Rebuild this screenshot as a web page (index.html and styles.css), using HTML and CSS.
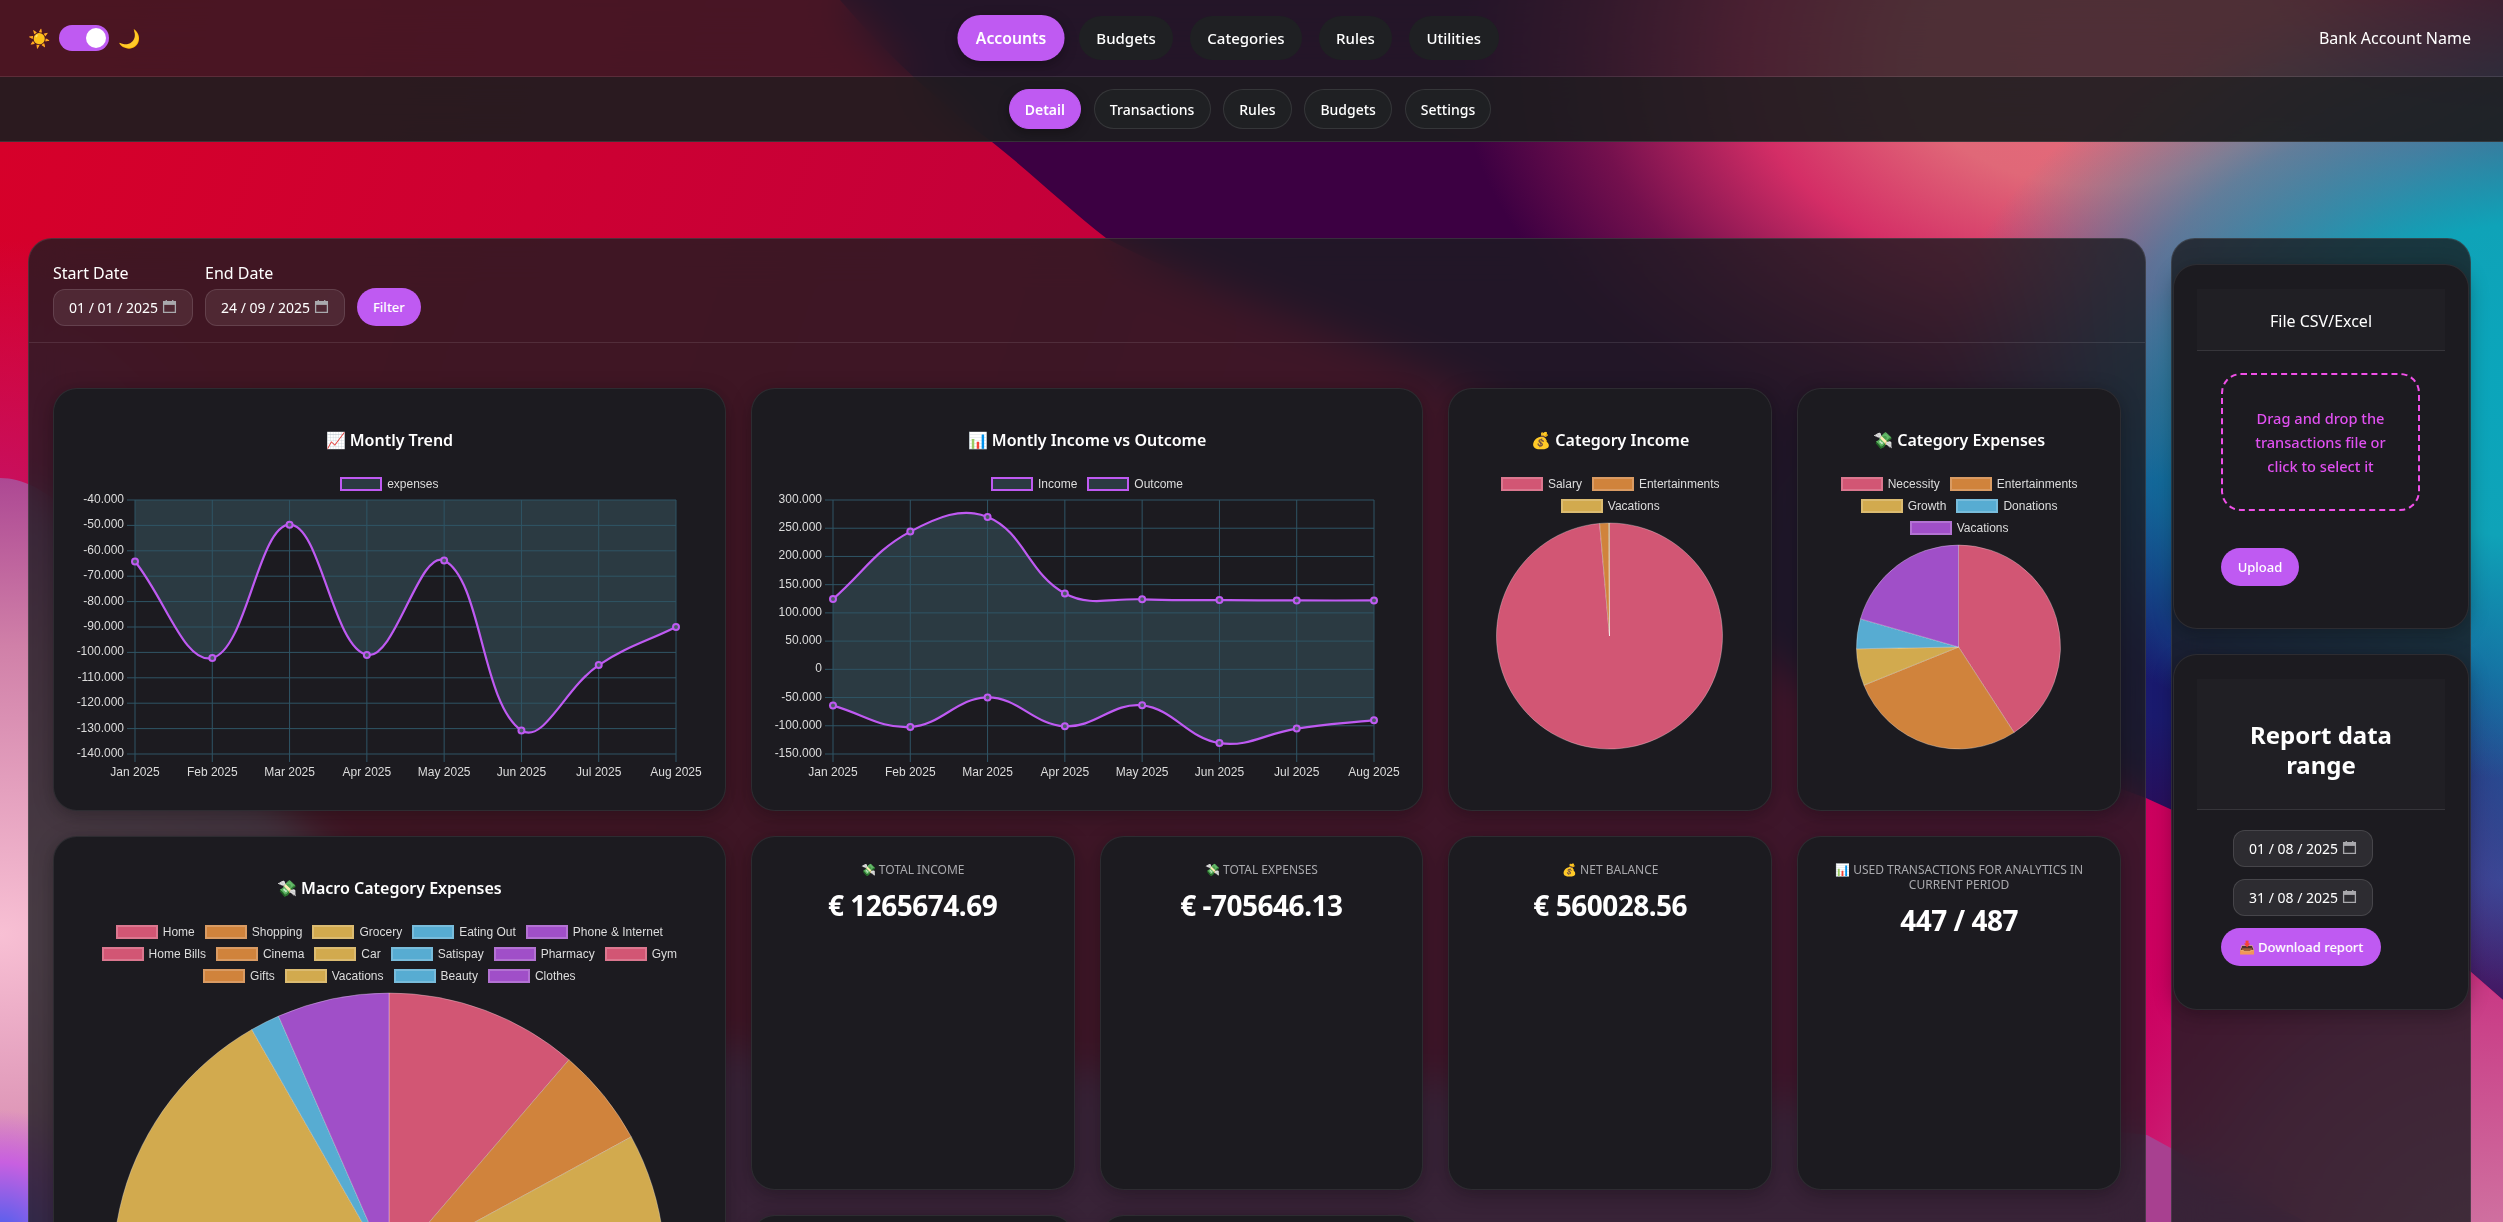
FILE: index.html
```html
<!DOCTYPE html>
<html lang="en">

<head>
    <meta charset="UTF-8">
    <meta name="viewport" content="width=device-width, initial-scale=1.0">
    <title>Accounts - Detail</title>
    <link rel="stylesheet" href="styles.css">
    <script src="charts.js" defer></script>
</head>

<body>
    <!-- wallpaper behind the glass panels -->
    <svg class="wallpaper" viewBox="0 0 2503 1222" width="2503" height="1222" aria-hidden="true">
        <defs>
            <linearGradient id="redFill" gradientUnits="userSpaceOnUse" x1="0" y1="142" x2="2200" y2="900">
                <stop offset="0" stop-color="#d6002a" />
                <stop offset="0.45" stop-color="#c4003a" />
                <stop offset="1" stop-color="#cc0060" />
            </linearGradient>
            <radialGradient id="redLeft" gradientUnits="userSpaceOnUse" cx="0" cy="500" r="260">
                <stop offset="0" stop-color="#c81060" />
                <stop offset="1" stop-color="#c81060" stop-opacity="0" />
            </radialGradient>
            <radialGradient id="redRight" gradientUnits="userSpaceOnUse" cx="2503" cy="1300" r="500">
                <stop offset="0" stop-color="#d080a8" />
                <stop offset="0.16" stop-color="#cf6f9f" />
                <stop offset="0.62" stop-color="#c93a85" />
                <stop offset="1" stop-color="#cc0060" stop-opacity="0" />
            </radialGradient>
            <radialGradient id="pinkFill" gradientUnits="userSpaceOnUse" cx="0" cy="0" r="1"
                gradientTransform="translate(0 934) scale(700 480)">
                <stop offset="0" stop-color="#f8c0d4" />
                <stop offset="0.6" stop-color="#d080a8" />
                <stop offset="1" stop-color="#a84090" />
            </radialGradient>
            <radialGradient id="blueCorner" gradientUnits="userSpaceOnUse" cx="0" cy="1240" r="130">
                <stop offset="0" stop-color="#4060f0" />
                <stop offset="0.6" stop-color="#c860e0" />
                <stop offset="1" stop-color="#c860e0" stop-opacity="0" />
            </radialGradient>
        </defs>
        <path fill="url(#redFill)"
            d="M840 0 C900 70 950 110 992 142 C1030 172 1070 210 1106 238 C1200 290 1350 330 1490 400 C1600 470 1680 600 1785 673 C1900 730 2020 750 2146 798 C2260 850 2380 910 2471 972 L2503 1000 L2503 1222 L0 1222 L0 0 Z" />
        <rect x="0" y="240" width="260" height="520" fill="url(#redLeft)" />
        <path fill="url(#redRight)"
            d="M2146 798 C2260 850 2380 910 2471 972 L2503 1000 L2503 1222 L2000 1222 Z" />
        <path fill="url(#pinkFill)"
            d="M0 478 C60 478 110 560 170 640 C240 760 330 900 560 1010 C800 1100 1300 1040 2147 1135 L2503 1330 L0 1330 Z" />
        <rect x="0" y="1110" width="130" height="112" fill="url(#blueCorner)" />
    </svg>

    <header class="topbar">
        <div class="theme-switch">
            <span class="theme-icon">☀️</span>
            <span class="toggle"><span class="toggle-knob"></span></span>
            <span class="theme-icon">🌙</span>
        </div>
        <nav class="pills">
            <a class="pill active">Accounts</a>
            <a class="pill">Budgets</a>
            <a class="pill">Categories</a>
            <a class="pill">Rules</a>
            <a class="pill">Utilities</a>
        </nav>
        <div class="account-name">Bank Account Name</div>
    </header>

    <nav class="subnav">
        <a class="subpill active">Detail</a>
        <a class="subpill">Transactions</a>
        <a class="subpill">Rules</a>
        <a class="subpill">Budgets</a>
        <a class="subpill">Settings</a>
    </nav>

    <main class="content">
        <section class="panel">
            <form class="filters">
                <div class="field">
                    <label>Start Date</label>
                    <div class="date-input">01 / 01 / 2025
                        <svg class="cal" viewBox="0 0 14 14"><path class="cal-band" d="M1.5 2.5h11v3h-11z" /><path d="M1.5 2.5h11v10h-11zM4 1v1.5M10 1v1.5" /></svg>
                    </div>
                </div>
                <div class="field">
                    <label>End Date</label>
                    <div class="date-input">24 / 09 / 2025
                        <svg class="cal" viewBox="0 0 14 14"><path class="cal-band" d="M1.5 2.5h11v3h-11z" /><path d="M1.5 2.5h11v10h-11zM4 1v1.5M10 1v1.5" /></svg>
                    </div>
                </div>
                <button type="button" class="btn">Filter</button>
            </form>

            <div class="dashboard">
                <div class="card span-2">
                    <h3 class="card-title">📈 Montly Trend</h3>
                    <div class="legend">
                        <span class="legend-item"><i class="swatch swatch-line"></i>expenses</span>
                    </div>
                    <div class="chart" id="trendChart"></div>
                </div>
                <div class="card span-2">
                    <h3 class="card-title">📊 Montly Income vs Outcome</h3>
                    <div class="legend">
                        <span class="legend-item"><i class="swatch swatch-line"></i>Income</span>
                        <span class="legend-item"><i class="swatch swatch-line"></i>Outcome</span>
                    </div>
                    <div class="chart" id="incomeChart"></div>
                </div>
                <div class="card">
                    <h3 class="card-title">💰 Category Income</h3>
                    <div class="legend">
                        <span class="legend-item"><i class="swatch pink"></i>Salary</span>
                        <span class="legend-item"><i class="swatch orange"></i>Entertainments</span>
                        <span class="legend-item"><i class="swatch gold"></i>Vacations</span>
                    </div>
                    <div class="chart" id="catIncomeChart"></div>
                </div>
                <div class="card">
                    <h3 class="card-title">💸 Category Expenses</h3>
                    <div class="legend">
                        <span class="legend-item"><i class="swatch pink"></i>Necessity</span>
                        <span class="legend-item"><i class="swatch orange"></i>Entertainments</span>
                        <span class="legend-item"><i class="swatch gold"></i>Growth</span>
                        <span class="legend-item"><i class="swatch blue"></i>Donations</span>
                        <span class="legend-item"><i class="swatch purple"></i>Vacations</span>
                    </div>
                    <div class="chart" id="catExpenseChart"></div>
                </div>

                <div class="card span-2 tall">
                    <h3 class="card-title">💸 Macro Category Expenses</h3>
                    <div class="legend">
                        <span class="legend-item"><i class="swatch pink"></i>Home</span>
                        <span class="legend-item"><i class="swatch orange"></i>Shopping</span>
                        <span class="legend-item"><i class="swatch gold"></i>Grocery</span>
                        <span class="legend-item"><i class="swatch blue"></i>Eating Out</span>
                        <span class="legend-item"><i class="swatch purple"></i>Phone &amp; Internet</span>
                        <span class="legend-item"><i class="swatch pink"></i>Home Bills</span>
                        <span class="legend-item"><i class="swatch orange"></i>Cinema</span>
                        <span class="legend-item"><i class="swatch gold"></i>Car</span>
                        <span class="legend-item"><i class="swatch blue"></i>Satispay</span>
                        <span class="legend-item"><i class="swatch purple"></i>Pharmacy</span>
                        <span class="legend-item"><i class="swatch pink"></i>Gym</span>
                        <span class="legend-item"><i class="swatch orange"></i>Gifts</span>
                        <span class="legend-item"><i class="swatch gold"></i>Vacations</span>
                        <span class="legend-item"><i class="swatch blue"></i>Beauty</span>
                        <span class="legend-item"><i class="swatch purple"></i>Clothes</span>
                    </div>
                    <div class="chart" id="macroChart"></div>
                </div>
                <div class="card stat">
                    <div class="stat-label">💸 Total Income</div>
                    <div class="stat-value">€ 1265674.69</div>
                </div>
                <div class="card stat">
                    <div class="stat-label">💸 Total Expenses</div>
                    <div class="stat-value">€ -705646.13</div>
                </div>
                <div class="card stat">
                    <div class="stat-label">💰 Net Balance</div>
                    <div class="stat-value">€ 560028.56</div>
                </div>
                <div class="card stat">
                    <div class="stat-label">📊 Used Transactions for analytics in current period</div>
                    <div class="stat-value">447 / 487</div>
                </div>
                <div class="card"></div>
                <div class="card"></div>
            </div>
        </section>

        <aside class="side-panel">
            <div class="side-card upload-card">
                <div class="side-head file-head">File CSV/Excel</div>
                <div class="dropzone">Drag and drop the transactions file or click to select it</div>
                <button type="button" class="btn upload-btn">Upload</button>
            </div>
            <div class="side-card report-card">
                <div class="side-head report-head">Report data range</div>
                <div class="date-input side-date">01 / 08 / 2025
                    <svg class="cal" viewBox="0 0 14 14"><path class="cal-band" d="M1.5 2.5h11v3h-11z" /><path d="M1.5 2.5h11v10h-11zM4 1v1.5M10 1v1.5" /></svg>
                </div>
                <div class="date-input side-date">31 / 08 / 2025
                    <svg class="cal" viewBox="0 0 14 14"><path class="cal-band" d="M1.5 2.5h11v3h-11z" /><path d="M1.5 2.5h11v10h-11zM4 1v1.5M10 1v1.5" /></svg>
                </div>
                <button type="button" class="btn download-btn">📥 Download report</button>
            </div>
        </aside>
    </main>
</body>

</html>
```

FILE: styles.css
```css
* {
    box-sizing: border-box;
}

html,
body {
    height: 100%;
    margin: 0;
    overflow: hidden;
}

body {
    background-color: #3c0042;
    color: #fff;
    font-family: "Noto Sans", Arial, sans-serif;
    display: flex;
    flex-direction: column;
    background-image:
        radial-gradient(ellipse 620px 400px at 2560px 380px, #0aa6bc 0, #0fa3b8 40%, rgba(15, 150, 180, 0.6) 72%, transparent 100%),
        radial-gradient(ellipse 640px 420px at 2100px 60px, #e86a7c 0, #e06878 30%, rgba(220, 48, 104, 0.95) 55%, rgba(130, 20, 80, 0.8) 80%, transparent 100%),
        radial-gradient(ellipse 200px 300px at 2560px 700px, #1f60a0 0, transparent 100%),
        radial-gradient(ellipse 300px 200px at 2503px 880px, #4a3a90 0, transparent 100%),
        radial-gradient(ellipse 620px 340px at 2280px 600px, #14186e 0, #1a1a6e 40%, transparent 100%);
    background-repeat: no-repeat;
}

.wallpaper {
    position: fixed;
    top: 0;
    left: 0;
    z-index: -1;
}

/* top bars */
.topbar {
    flex: none;
    height: 77px;
    display: flex;
    align-items: center;
    justify-content: space-between;
    padding: 0 32px 0 28px;
    background-color: rgba(28, 28, 32, 0.75);
    border-bottom: 1px solid rgba(255, 255, 255, 0.1);
    backdrop-filter: blur(20px);
}

.theme-switch {
    display: flex;
    align-items: center;
    gap: 9px;
}

.theme-icon {
    font-size: 18px;
    line-height: 24px;
}

.toggle {
    width: 50px;
    height: 26px;
    border-radius: 13px;
    background-color: #bf5af2;
    display: flex;
    align-items: center;
    justify-content: flex-end;
    padding-right: 3px;
}

.toggle-knob {
    width: 20px;
    height: 20px;
    border-radius: 50%;
    background-color: #fff;
}

.pills {
    display: flex;
    align-items: center;
    gap: 16.5px;
}

.pill {
    height: 44px;
    padding: 0 17.5px;
    display: flex;
    align-items: center;
    border-radius: 22px;
    background-color: #1f2023;
    font-size: 15px;
    font-weight: 500;
}

.pill.active {
    background-color: #bf5af2;
    font-weight: 600;
    transform: scale(1.05);
    box-shadow: 0 4px 12px rgba(0, 0, 0, 0.3);
}

.account-name {
    font-size: 16px;
}

.subnav {
    flex: none;
    height: 65px;
    padding-right: 3px;
    display: flex;
    align-items: center;
    justify-content: center;
    gap: 12.5px;
    background-color: rgba(28, 28, 30, 0.92);
    border-bottom: 1px solid rgba(255, 255, 255, 0.1);
    backdrop-filter: blur(20px);
}

.subpill {
    height: 40px;
    padding: 0 15.2px;
    display: flex;
    align-items: center;
    border-radius: 20px;
    border: 1px solid rgba(255, 255, 255, 0.1);
    background-color: #1f2023;
    font-size: 14px;
    font-weight: 500;
}

.subpill.active {
    background-color: #bf5af2;
    border-color: #bf5af2;
    font-weight: 600;
    box-shadow: 0 4px 12px rgba(0, 0, 0, 0.3);
}

/* page body */
.content {
    flex: none;
    display: flex;
    align-items: flex-start;
    gap: 25px;
    padding: 96px 32px 0 28px;
}

.panel {
    flex: 1;
    min-width: 0;
    height: 1400px;
    border-radius: 24px;
    border: 1px solid rgba(255, 255, 255, 0.1);
    background-color: rgba(28, 28, 32, 0.8);
    backdrop-filter: blur(20px);
}

.filters {
    height: 104px;
    display: flex;
    align-items: flex-end;
    gap: 12px;
    padding: 0 24px 16px;
    border-bottom: 1px solid rgba(255, 255, 255, 0.1);
}

.field label {
    display: block;
    font-size: 16px;
    line-height: 22px;
    margin-bottom: 5px;
}

.date-input {
    width: 140px;
    height: 37px;
    padding: 0 15px;
    display: flex;
    align-items: center;
    justify-content: space-between;
    border-radius: 12px;
    border: 1px solid rgba(255, 255, 255, 0.12);
    background-color: rgba(255, 255, 255, 0.08);
    font-size: 14px;
    white-space: nowrap;
}

.cal {
    width: 15px;
    height: 15px;
    margin-top: -2px;
    fill: none;
    stroke: #a9a9ad;
    stroke-width: 1.2;
}

.cal-band {
    fill: #a9a9ad;
    stroke: none;
}

.btn {
    height: 38px;
    padding: 0 16px;
    border: none;
    border-radius: 19px;
    background-color: #bf5af2;
    color: #fff;
    font-family: inherit;
    font-size: 13px;
    font-weight: 500;
    cursor: pointer;
}

.dashboard {
    display: grid;
    grid-template-columns: repeat(6, 1fr);
    grid-template-rows: 423px 354px 300px;
    gap: 25px;
    padding: 45px 24px 0;
}

.card {
    border-radius: 24px;
    border: 1px solid rgba(255, 255, 255, 0.08);
    background-color: #1c1b20;
    box-shadow: 0 4px 20px rgba(0, 0, 0, 0.3);
    padding: 24px;
    overflow: hidden;
}

.span-2 {
    grid-column: span 2;
}

.tall {
    grid-row: span 2;
}

.card-title {
    margin: 16px 0 22px;
    font-size: 16px;
    line-height: 22px;
    font-weight: 600;
    text-align: center;
}

.legend {
    display: flex;
    flex-wrap: wrap;
    justify-content: center;
    column-gap: 10px;
    font-family: "Liberation Sans", Arial, sans-serif;
    font-size: 12px;
    line-height: 22px;
    color: #dcdcdc;
}

.legend-item {
    display: flex;
    align-items: center;
    gap: 5px;
}

.swatch {
    width: 42px;
    height: 14px;
    border: 2px solid rgba(255, 255, 255, 0.2);
}

.swatch-line {
    background-color: #2b3a42;
    border-color: #bf5af2;
}

.pink {
    background-color: #d25674;
}

.orange {
    background-color: #d0833c;
}

.gold {
    background-color: #d2aa4e;
}

.blue {
    background-color: #57acd2;
}

.purple {
    background-color: #a04fc8;
}

/* svg charts drawn by charts.js */
.chart svg {
    display: block;
    overflow: visible;
}

.chart .area {
    fill: #2b3a42;
}

.chart .grid {
    stroke: #2f5565;
    stroke-width: 1;
}

.chart .line {
    fill: none;
    stroke: #bf5af2;
    stroke-width: 2.2;
}

.chart .point {
    fill: #4a5a66;
    stroke: #bf5af2;
    stroke-width: 2;
}

.chart .tick {
    fill: #dcdcdc;
    font-family: "Liberation Sans", Arial, sans-serif;
    font-size: 12px;
}

.chart .slice {
    stroke: rgba(255, 255, 255, 0.3);
    stroke-width: 1;
}

.slice.pink {
    fill: #d25674;
}

.slice.orange {
    fill: #d0833c;
}

.slice.gold {
    fill: #d2aa4e;
}

.slice.blue {
    fill: #57acd2;
}

.slice.purple {
    fill: #a04fc8;
}

.stat {
    text-align: center;
}

.stat-label {
    margin-top: 1px;
    font-size: 12px;
    line-height: 15px;
    color: #a9a9ad;
    text-transform: uppercase;
}

.stat-value {
    margin-top: 9px;
    font-size: 28px;
    line-height: 38px;
    font-weight: 700;
    letter-spacing: -0.5px;
}

/* right column */
.side-panel {
    flex: none;
    width: 300px;
    height: 1400px;
    padding: 25px 1px 0;
    display: flex;
    flex-direction: column;
    gap: 25px;
    border-radius: 24px;
    border: 1px solid rgba(255, 255, 255, 0.1);
    background-color: rgba(28, 28, 32, 0.8);
    backdrop-filter: blur(20px);
}

.side-card {
    padding: 24px 23px;
    border-radius: 24px;
    border: 1px solid rgba(255, 255, 255, 0.08);
    background-color: #1c1b20;
    box-shadow: 0 4px 20px rgba(0, 0, 0, 0.3);
}

.upload-card {
    height: 365px;
}

.report-card {
    height: 356px;
}

.side-head {
    height: 62px;
    margin: 0;
    display: flex;
    align-items: center;
    justify-content: center;
    text-align: center;
    font-size: 16px;
    background-color: rgba(255, 255, 255, 0.02);
    border-bottom: 1px solid rgba(255, 255, 255, 0.1);
}

.file-head {
    padding-top: 3px;
}

.report-head {
    height: 131px;
    padding: 12px 24px 0;
    font-size: 24px;
    line-height: 30px;
    font-weight: 700;
    margin-bottom: 20px;
}

.dropzone {
    width: 199px;
    height: 138px;
    margin: 22px 0 37px 24px;
    padding: 0 16px;
    display: flex;
    align-items: center;
    text-align: center;
    border: 2px dashed #f050e8;
    border-radius: 20px;
    color: #e050f0;
    font-size: 14.6px;
    font-weight: 500;
    line-height: 24px;
}

.upload-btn {
    margin-left: 24px;
    width: 78px;
    padding: 0;
}

.side-date {
    margin: 0 0 12px 36px;
}

.download-btn {
    margin: 0 0 0 24px;
    width: 160px;
    padding: 0;
    white-space: nowrap;
}
```

FILE: charts.js
```js
const SVG_NS = "http://www.w3.org/2000/svg";
const MONTHS = ["Jan 2025", "Feb 2025", "Mar 2025", "Apr 2025", "May 2025", "Jun 2025", "Jul 2025", "Aug 2025"];
const OUTCOME = [-64.2, -102.2, -49.7, -101, -63.8, -130.7, -105, -90];
const INCOME = [124.5, 244, 270, 134.5, 124, 122.7, 122, 122];

function add(parent, tag, attrs, text) {
    const node = document.createElementNS(SVG_NS, tag);
    for (const key in attrs) {
        node.setAttribute(key, attrs[key]);
    }
    if (text !== undefined) {
        node.textContent = text;
    }
    parent.appendChild(node);
    return node;
}

function newSvg(id, width, height) {
    return add(document.getElementById(id), "svg", {
        width: width,
        height: height,
        viewBox: "0 0 " + width + " " + height
    });
}

// same control points as a chart.js line with tension 0.4
function splinePath(points) {
    const t = 0.4;
    const before = [];
    const after = [];
    points.forEach((p, i) => {
        const prev = points[i - 1] || p;
        const next = points[i + 1] || p;
        const d01 = Math.hypot(p.x - prev.x, p.y - prev.y);
        const d12 = Math.hypot(next.x - p.x, next.y - p.y);
        const total = d01 + d12 || 1;
        const dx = next.x - prev.x;
        const dy = next.y - prev.y;
        before.push({ x: p.x - t * (d01 / total) * dx, y: p.y - t * (d01 / total) * dy });
        after.push({ x: p.x + t * (d12 / total) * dx, y: p.y + t * (d12 / total) * dy });
    });
    let d = "M" + points[0].x + " " + points[0].y;
    for (let i = 1; i < points.length; i++) {
        d += " C" + after[i - 1].x + " " + after[i - 1].y + " " + before[i].x + " " + before[i].y + " " + points[i].x + " " + points[i].y;
    }
    return d;
}

function formatTick(value) {
    if (value === 0) {
        return "0";
    }
    return (value < 0 ? "-" : "") + Math.abs(value) + ".000";
}

function lineChart(id, opts) {
    const left = 57, right = 598, top = 5, bottom = 259;
    const svg = newSvg(id, 622, 290);
    const xAt = i => left + (right - left) * i / (MONTHS.length - 1);
    const yAt = v => top + (opts.max - v) / (opts.max - opts.min) * (bottom - top);
    const baseY = opts.max < 0 ? top : yAt(0);

    const series = opts.series.map(data => data.map((v, i) => ({ x: xAt(i), y: yAt(v) })));

    series.forEach(points => {
        const d = splinePath(points) + " L" + right + " " + baseY + " L" + left + " " + baseY + " Z";
        add(svg, "path", { class: "area", d: d });
    });

    for (let v = opts.max; v >= opts.min; v -= opts.step) {
        const y = yAt(v);
        add(svg, "line", { class: "grid", x1: left - 8, x2: right, y1: y, y2: y });
        add(svg, "text", { class: "tick", x: left - 11, y: y + 3, "text-anchor": "end" }, formatTick(v));
    }

    MONTHS.forEach((label, i) => {
        const x = xAt(i);
        add(svg, "line", { class: "grid", x1: x, x2: x, y1: top, y2: bottom + 8 });
        add(svg, "text", { class: "tick", x: x, y: bottom + 22, "text-anchor": "middle" }, label);
    });

    series.forEach(points => {
        add(svg, "path", { class: "line", d: splinePath(points) });
        points.forEach(p => add(svg, "circle", { class: "point", cx: p.x, cy: p.y, r: 3 }));
    });
}

function pieChart(id, opts) {
    const svg = newSvg(id, opts.width, opts.cy + opts.r + 4);
    const pos = deg => {
        const a = deg * Math.PI / 180;
        return (opts.cx + opts.r * Math.sin(a)) + " " + (opts.cy - opts.r * Math.cos(a));
    };
    let start = 0;
    opts.slices.forEach(slice => {
        const big = slice.end - start > 180 ? 1 : 0;
        const d = "M" + opts.cx + " " + opts.cy + " L" + pos(start) + " A" + opts.r + " " + opts.r + " 0 " + big + " 1 " + pos(slice.end) + " Z";
        add(svg, "path", { class: "slice " + slice.color, d: d });
        start = slice.end;
    });
}

lineChart("trendChart", { max: -40, min: -140, step: 10, series: [OUTCOME] });
lineChart("incomeChart", { max: 300, min: -150, step: 50, series: [INCOME, OUTCOME] });

pieChart("catIncomeChart", {
    width: 273, cx: 136.5, cy: 119, r: 113,
    slices: [
        { color: "pink", end: 355 },
        { color: "orange", end: 359.6 },
        { color: "gold", end: 360 }
    ]
});

pieChart("catExpenseChart", {
    width: 273, cx: 136.5, cy: 108, r: 102,
    slices: [
        { color: "pink", end: 147 },
        { color: "orange", end: 248 },
        { color: "gold", end: 269 },
        { color: "blue", end: 286 },
        { color: "purple", end: 360 }
    ]
});

pieChart("macroChart", {
    width: 622, cx: 311, cy: 282, r: 276,
    slices: [
        { color: "pink", end: 40.7 },
        { color: "orange", end: 61.4 },
        { color: "gold", end: 330.2 },
        { color: "blue", end: 336.4 },
        { color: "purple", end: 360 }
    ]
});
```
